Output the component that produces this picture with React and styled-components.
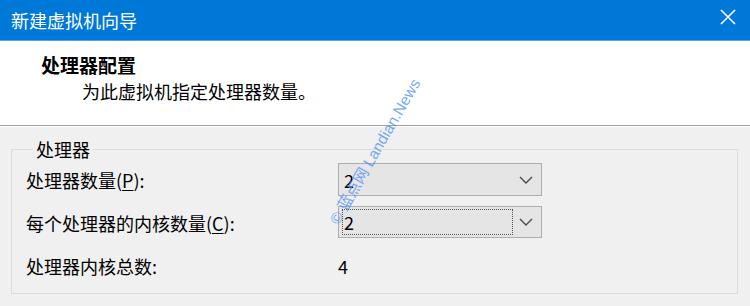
import React from "react";
import styled, { createGlobalStyle } from "styled-components";

const Global = createGlobalStyle`
  html, body { margin: 0; padding: 0; background: #f0f0f0; }
  body { font-family: "Noto Sans CJK SC", "Noto Sans", sans-serif; }
`;

const Window = styled.div`
  position: relative;
  width: 750px;
  height: 306px;
  overflow: hidden;
  display: flex;
  flex-direction: column;
  background: #f0f0f0;
  color: #000;
  font-size: 18px;
`;

const TitleBar = styled.div`
  height: 40px;
  flex: none;
  background: #0078d7;
  border-bottom: 1px solid #4fa3e6;
  display: flex;
  align-items: center;
  justify-content: space-between;
  padding: 0 14px 0 11px;
`;

const Title = styled.div`
  color: #fff;
  font-size: 18px;
  line-height: 22px;
  margin-top: -1px;
`;

const CloseButton = styled.div`
  width: 16px;
  height: 16px;
  display: flex;
  margin-top: -6px;
`;

const Header = styled.div`
  flex: none;
  height: 85px;
  background: #fff;
  box-sizing: border-box;
  padding: 13px 0 0 41px;
  border-bottom: 1px solid #a0a0a0;
  box-shadow: 0 1px 0 #ffffff;
`;

const Heading = styled.div`
  font-weight: bold;
  font-size: 19px;
  line-height: 22px;
`;

const Subtitle = styled.div`
  font-size: 18px;
  line-height: 22px;
  margin: 4px 0 0 41px;
`;

const Body = styled.div`
  flex: 1;
  padding: 12px 12px 0 11px;
`;

const Group = styled.fieldset`
  margin: 0;
  padding: 3px 0 0 14px;
  width: 727px;
  height: 156px;
  box-sizing: border-box;
  border: 1px solid #dcdcdc;
  display: grid;
  grid-template-columns: 312px 204px;
  grid-auto-rows: 33px;
  row-gap: 10px;
  align-items: center;
  align-content: start;
`;

const Legend = styled.legend`
  margin-left: 7px;
  padding: 0 3px;
  font-size: 18px;
  line-height: 22px;
`;

const Label = styled.div`
  font-size: 18px;
  line-height: 22px;
  white-space: nowrap;
`;

const Key = styled.span`
  text-decoration: underline;
  text-underline-offset: 2px;
`;

const Value = styled.div`
  font-size: 18px;
  line-height: 22px;
  padding-left: 0;
`;

const Combo = styled.div`
  height: ${(p) => p.$h}px;
  box-sizing: border-box;
  border: 1px solid #adadad;
  background: #e5e5e5;
  display: flex;
  align-items: center;
  padding: 0 3px;
  gap: 6px;
  align-self: ${(p) => (p.$h === 33 ? "center" : "start")};
`;

const ComboText = styled.div`
  flex: 1;
  height: 26px;
  box-sizing: border-box;
  display: flex;
  align-items: center;
  padding-left: 1px;
  font-size: 18px;
  border: 1px dotted ${(p) => (p.$focus ? "#555" : "transparent")};
`;

const Chevron = styled.svg`
  flex: none;
  margin-right: 5px;
`;

const Watermark = styled.span`
  position: absolute;
  left: 341px;
  top: 211px;
  line-height: 16px;
  font-size: 15.5px;
  font-family: "Liberation Sans", "Noto Sans CJK SC", sans-serif;
  color: rgba(70, 140, 245, 0.75);
  white-space: nowrap;
  transform-origin: 0 100%;
  transform: rotate(-60deg);
  pointer-events: none;
`;

const ChevronIcon = () => (
  <Chevron width="14" height="8" viewBox="0 0 14 8">
    <path d="M1 1 L7 7 L13 1" fill="none" stroke="#4a4a4a" strokeWidth="1.4" />
  </Chevron>
);

export default function App() {
  return (
    <Window>
      <Global />
      <TitleBar>
        <Title>新建虚拟机向导</Title>
        <CloseButton>
          <svg width="16" height="16" viewBox="0 0 16 16">
            <path d="M1 1 L15 15 M15 1 L1 15" stroke="#fff" strokeWidth="1.6" />
          </svg>
        </CloseButton>
      </TitleBar>
      <Header>
        <Heading>处理器配置</Heading>
        <Subtitle>为此虚拟机指定处理器数量。</Subtitle>
      </Header>
      <Body>
        <Group>
          <Legend>处理器</Legend>
          <Label>
            处理器数量(<Key>P</Key>):
          </Label>
          <Combo $h={33}>
            <ComboText>2</ComboText>
            <ChevronIcon />
          </Combo>
          <Label>
            每个处理器的内核数量(<Key>C</Key>):
          </Label>
          <Combo $h={32}>
            <ComboText $focus>2</ComboText>
            <ChevronIcon />
          </Combo>
          <Label>处理器内核总数:</Label>
          <Value>4</Value>
        </Group>
      </Body>
      <Watermark>© 蓝点网 Landian.News</Watermark>
    </Window>
  );
}
